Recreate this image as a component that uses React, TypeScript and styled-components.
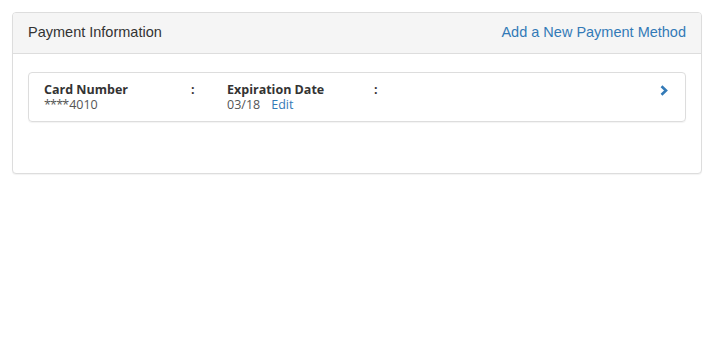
import React from "react";
import styled, { createGlobalStyle } from "styled-components";

const GlobalStyle = createGlobalStyle`
  html, body { margin: 0; padding: 0; background: #fff; }
  body { font-family: "Liberation Sans", Arial, sans-serif; color: #333; }
`;

const Page = styled.div`
  padding: 12px;
`;

const Panel = styled.section`
  width: 690px;
  box-sizing: border-box;
  border: 1px solid #ddd;
  border-radius: 4px;
  background: #fff;
  box-shadow: 0 1px 1px rgba(0, 0, 0, 0.05);
`;

const PanelHeading = styled.header`
  display: flex;
  justify-content: space-between;
  align-items: center;
  padding: 9px 15px 11px;
  background: #f5f5f5;
  border-bottom: 1px solid #ddd;
  border-radius: 3px 3px 0 0;
  font-size: 14.5px;
  line-height: 20px;
`;

const PanelTitle = styled.h3`
  margin: 0;
  font-size: inherit;
  font-weight: normal;
  color: #333;
`;

const HeaderLink = styled.a`
  color: #337ab7;
  text-decoration: none;
  cursor: pointer;
`;

const PanelBody = styled.div`
  padding: 18px 15px 51px;
`;

const CardRow = styled.div`
  display: flex;
  align-items: flex-start;
  padding: 9px 15px 9px;
  border: 1px solid #ddd;
  border-radius: 4px;
  box-shadow: 0 1px 1px rgba(0, 0, 0, 0.05);
  font-family: "Open Sans", "Liberation Sans", sans-serif;
  font-size: 12.5px;
  line-height: 15px;
`;

const Field = styled.div`
  width: 183px;
  flex: none;
`;

const FieldHead = styled.div`
  display: flex;
  color: #333;
  font-weight: 700;
`;

const Label = styled.span`
  width: 147px;
  flex: none;
`;

const Value = styled.div`
  color: #555;
  display: flex;
`;

const Mask = styled.span`
  letter-spacing: -0.8px;
  margin-right: 0.8px;
`;

const EditLink = styled.a`
  margin-left: 11px;
  color: #337ab7;
  text-decoration: none;
  cursor: pointer;
`;

const Chevron = styled.svg`
  margin-left: auto;
  margin-top: 3px;
  margin-right: 2px;
  flex: none;
`;

export default function App() {
  return (
    <>
      <GlobalStyle />
      <Page>
        <Panel>
          <PanelHeading>
            <PanelTitle>Payment Information</PanelTitle>
            <HeaderLink>Add a New Payment Method</HeaderLink>
          </PanelHeading>
          <PanelBody>
            <CardRow>
              <Field>
                <FieldHead>
                  <Label>Card Number</Label>:
                </FieldHead>
                <Value>
                  <Mask>****</Mask>4010
                </Value>
              </Field>
              <Field>
                <FieldHead>
                  <Label>Expiration Date</Label>:
                </FieldHead>
                <Value>
                  03/18<EditLink>Edit</EditLink>
                </Value>
              </Field>
              <Chevron width="8" height="11" viewBox="0 0 8 11" aria-hidden="true">
                <path d="M1.5 1.2 L6 5.5 L1.5 9.8" fill="none" stroke="#337ab7" strokeWidth="2.6" strokeLinejoin="miter" />
              </Chevron>
            </CardRow>
          </PanelBody>
        </Panel>
      </Page>
    </>
  );
}
